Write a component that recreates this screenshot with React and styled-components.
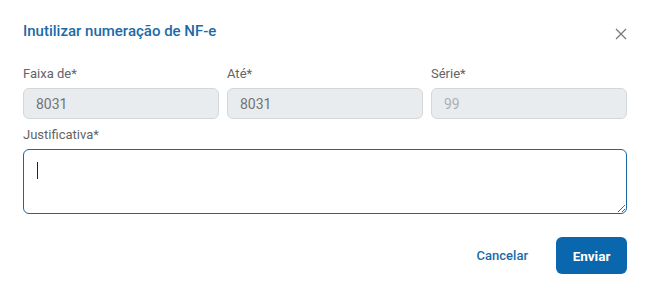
import React from "react";
import styled, { createGlobalStyle } from "styled-components";

const GlobalStyle = createGlobalStyle`
  html, body {
    margin: 0;
    padding: 0;
    background: #fff;
    font-family: Roboto, "Liberation Sans", sans-serif;
  }
  * {
    box-sizing: border-box;
  }
`;

const Dialog = styled.div`
  width: 649px;
  height: 293px;
  background: #fff;
  padding: 22px 22px 0 23px;
  display: flex;
  flex-direction: column;
`;

const Header = styled.div`
  display: flex;
  justify-content: space-between;
  align-items: flex-start;
  height: 44px;
`;

const Title = styled.h2`
  margin: 0;
  font-size: 15px;
  font-weight: 500;
  color: #1b6aa8;
  line-height: 18px;
`;

const CloseButton = styled.button`
  border: none;
  background: none;
  padding: 0;
  margin: 6px 0 0 0;
  width: 12px;
  height: 12px;
  cursor: pointer;
  display: flex;
`;

const Row = styled.div`
  display: grid;
  grid-template-columns: repeat(3, minmax(0, 1fr));
  gap: 8px;
`;

const Field = styled.div`
  display: flex;
  flex-direction: column;
  min-width: 0;
`;

const Label = styled.label`
  font-size: 13px;
  font-weight: 400;
  color: #626467;
  line-height: 16px;
  margin-bottom: 6px;
`;

const Input = styled.input`
  width: 100%;
  height: 31px;
  border: 1px solid #d4d7da;
  border-radius: 6px;
  background: #e9ecef;
  padding: 0 12px;
  font-family: inherit;
  font-size: 14px;
  font-weight: 400;
  color: ${({ $muted }) => ($muted ? "#aeb0b3" : "#727476")};
  outline: none;
`;

const Area = styled.div`
  margin-top: 8px;
  display: flex;
  flex-direction: column;
`;

const AreaBox = styled.div`
  position: relative;
  display: flex;
`;

const TextArea = styled.textarea`
  width: 100%;
  height: 65px;
  border: 1.5px solid #1a67a6;
  border-radius: 6px;
  padding: 12px 13px;
  font-family: inherit;
  font-size: 14px;
  resize: vertical;
  outline: none;
  caret-color: transparent;
`;

const Caret = styled.span`
  position: absolute;
  left: 14px;
  top: 13px;
  width: 1px;
  height: 17px;
  background: #222;
  pointer-events: none;
`;

const Footer = styled.div`
  display: flex;
  justify-content: flex-end;
  align-items: center;
  gap: 28px;
  margin-top: 23px;
`;

const TextButton = styled.button`
  border: none;
  background: none;
  padding: 0;
  font-family: inherit;
  font-size: 13px;
  font-weight: 500;
  color: #1b6aa8;
  cursor: pointer;
`;

const PrimaryButton = styled.button`
  border: none;
  background: #0a67ad;
  color: #fff;
  border-radius: 6px;
  height: 37px;
  width: 71px;
  font-family: inherit;
  font-size: 13.5px;
  font-weight: 700;
  cursor: pointer;
`;

export default function App() {
  return (
    <>
      <GlobalStyle />
      <Dialog>
        <Header>
          <Title>Inutilizar numeração de NF-e</Title>
          <CloseButton aria-label="Fechar">
            <svg width="12" height="12" viewBox="0 0 12 12">
              <path d="M1 1L11 11M11 1L1 11" stroke="#777" strokeWidth="1.2" />
            </svg>
          </CloseButton>
        </Header>
        <Row>
          <Field>
            <Label>Faixa de*</Label>
            <Input defaultValue="8031" readOnly />
          </Field>
          <Field>
            <Label>Até*</Label>
            <Input defaultValue="8031" readOnly />
          </Field>
          <Field>
            <Label>Série*</Label>
            <Input defaultValue="99" $muted readOnly />
          </Field>
        </Row>
        <Area>
          <Label>Justificativa*</Label>
          <AreaBox>
            <TextArea />
            <Caret />
          </AreaBox>
        </Area>
        <Footer>
          <TextButton>Cancelar</TextButton>
          <PrimaryButton>Enviar</PrimaryButton>
        </Footer>
      </Dialog>
    </>
  );
}
